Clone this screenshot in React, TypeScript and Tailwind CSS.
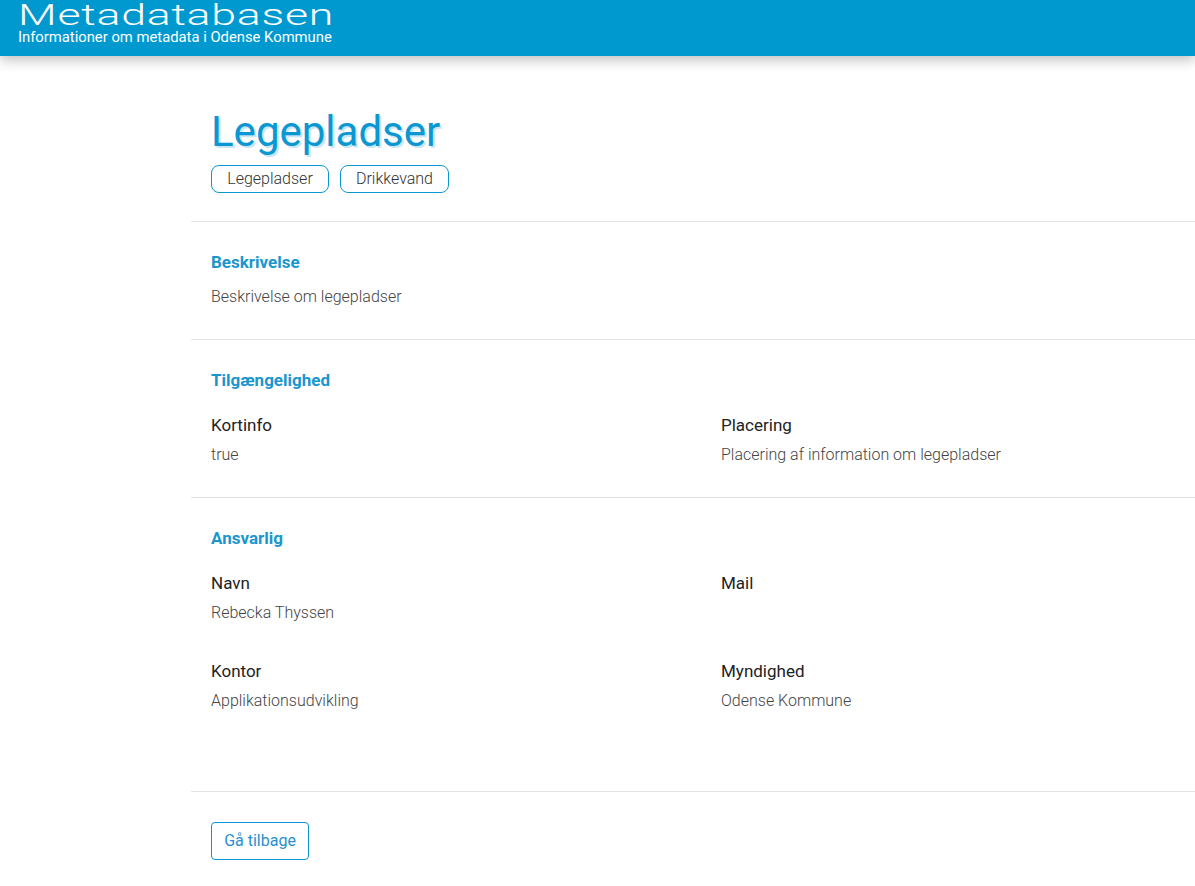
import React from "react";

const Field = ({ label, value }: { label: string; value?: string }) => (
  <div>
    <div className="text-[17px] leading-[24px] font-normal text-[#222]">{label}</div>
    <div className="mt-[6px] h-[24px] text-[16px] leading-[24px] font-light text-[#444]">{value}</div>
  </div>
);

export default function App() {
  return (
    <div className="min-h-[886px] bg-white font-['Roboto',sans-serif] overflow-hidden">
      <header className="h-[56px] bg-[#0099cf] shadow-[0_4px_12px_rgba(0,0,0,0.25)] relative z-10 pl-[18px]">
        <div className="origin-left scale-x-[1.54] text-[29px] leading-[30px] font-light text-white tracking-[0.5px] whitespace-nowrap">
          Metadatabasen
        </div>
        <div className="text-[14.8px] leading-[14px] text-white font-normal whitespace-nowrap">
          Informationer om metadata i Odense Kommune
        </div>
      </header>
      <main className="ml-[191px] pt-[50px]">
        <div className="px-[20px] pb-[28px]">
          <h1 className="text-[42px] leading-[52px] font-normal text-[#0b97d2] [text-shadow:2px_2px_0_#c9e6f5]">
            Legepladser
          </h1>
          <div className="mt-[7px] flex gap-[11px]">
            <span className="h-[28px] w-[118px] flex items-center justify-center rounded-[8px] border border-[#0b97d2] text-[16px] font-light text-[#333]">
              Legepladser
            </span>
            <span className="h-[28px] w-[109px] flex items-center justify-center rounded-[8px] border border-[#0b97d2] text-[16px] font-light text-[#333]">
              Drikkevand
            </span>
          </div>
        </div>
        <section className="border-t border-[#e3e3e3] px-[20px] pt-[28px] pb-[30px]">
          <h2 className="text-[17px] leading-[24px] font-bold text-[#1a96cf]">Beskrivelse</h2>
          <p className="mt-[11px] text-[16px] leading-[24px] font-light text-[#444]">Beskrivelse om legepladser</p>
        </section>
        <section className="border-t border-[#e3e3e3] px-[20px] pt-[28px] pb-[30px]">
          <h2 className="text-[17px] leading-[24px] font-bold text-[#1a96cf]">Tilgængelighed</h2>
          <div className="mt-[21px] grid grid-cols-[510px_1fr]">
            <Field label="Kortinfo" value="true" />
            <Field label="Placering" value="Placering af information om legepladser" />
          </div>
        </section>
        <section className="border-t border-[#e3e3e3] px-[20px] pt-[28px] pb-[78px]">
          <h2 className="text-[17px] leading-[24px] font-bold text-[#1a96cf]">Ansvarlig</h2>
          <div className="mt-[21px] grid grid-cols-[510px_1fr] gap-y-[34px]">
            <Field label="Navn" value="Rebecka Thyssen" />
            <Field label="Mail" />
            <Field label="Kontor" value="Applikationsudvikling" />
            <Field label="Myndighed" value="Odense Kommune" />
          </div>
        </section>
        <div className="border-t border-[#e3e3e3] px-[20px] pt-[30px] pb-[20px]">
          <button className="h-[38px] w-[98px] rounded-[4px] border border-[#0b97d2] text-[16px] font-normal text-[#2a8fd0]">
            Gå tilbage
          </button>
        </div>
      </main>
    </div>
  );
}
